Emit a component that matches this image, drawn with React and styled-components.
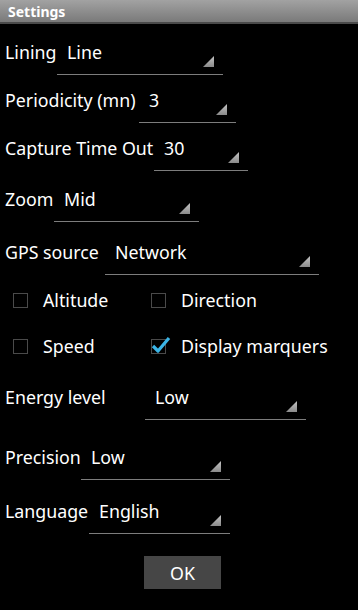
import React from 'react';
import styled, { createGlobalStyle } from 'styled-components';

const GlobalStyle = createGlobalStyle`
  html, body {
    margin: 0;
    padding: 0;
    background: #000;
  }
  body {
    font-family: "Noto Sans", "Open Sans", sans-serif;
    color: #fff;
  }
`;

const Screen = styled.div`
  width: 358px;
  height: 610px;
  background: #000;
  overflow: hidden;
`;

const TitleBar = styled.div`
  height: 22px;
  padding-left: 8px;
  display: flex;
  align-items: center;
  background: linear-gradient(#a2a2a2, #7a7a7a);
  border-bottom: 2px solid #4a4a4a;
  font-size: 14px;
  font-weight: 700;
  color: #fff;
`;

const Body = styled.div`
  padding-left: 5px;
  display: flex;
  flex-direction: column;
`;

const Row = styled.div`
  display: flex;
  align-items: flex-start;
  margin-top: ${p => p.$top}px;
`;

const Label = styled.div`
  width: ${p => p.$w}px;
  flex: none;
  font-size: 17.8px;
  line-height: 24px;
  white-space: nowrap;
`;

const Spinner = styled.div`
  width: ${p => p.$w}px;
  height: 35px;
  padding-left: 10px;
  box-sizing: border-box;
  display: flex;
  justify-content: space-between;
  border-bottom: 1px solid #7d7d7d;
`;

const Value = styled.span`
  font-size: 17.8px;
  line-height: 24px;
`;

const Arrow = styled.span`
  align-self: flex-end;
  width: 11px;
  height: 11px;
  margin: 0 9px 7px 0;
  background: linear-gradient(#c4c4c4, #8a8a8a);
  clip-path: polygon(100% 0, 100% 100%, 0 100%);
`;

const CheckGrid = styled.div`
  display: grid;
  grid-template-columns: 138px auto;
  row-gap: 22px;
  margin-top: 13px;
  padding-left: 8px;
`;

const CheckItem = styled.div`
  display: flex;
  align-items: center;
  gap: 15px;
  height: 24px;
  font-size: 17.8px;
`;

const Box = styled.span`
  position: relative;
  width: 15px;
  height: 15px;
  box-sizing: border-box;
  border: 1px solid #4a4a4a;
  flex: none;
`;

const Tick = styled.svg`
  position: absolute;
  left: -1px;
  top: -4px;
`;

const OkButton = styled.button`
  margin: 22px 0 0 139px;
  width: 77px;
  height: 33px;
  border: none;
  background: #464646;
  color: #fff;
  font-family: "Noto Sans", "Open Sans", sans-serif;
  font-size: 17.8px;
  padding: 0;
`;

const Select = ({ label, labelW, value, w, top }) => (
  <Row $top={top}>
    <Label $w={labelW}>{label}</Label>
    <Spinner $w={w}>
      <Value>{value}</Value>
      <Arrow />
    </Spinner>
  </Row>
);

const Check = ({ label, checked }) => (
  <CheckItem>
    <Box>
      {checked && (
        <Tick width="20" height="18" viewBox="0 0 20 18">
          <path d="M2 10 L7 15 L18 2" fill="none" stroke="#3ab4e6" strokeWidth="3.2" strokeLinejoin="round" />
        </Tick>
      )}
    </Box>
    <span>{label}</span>
  </CheckItem>
);

export default function App() {
  return (
    <Screen>
      <GlobalStyle />
      <TitleBar>Settings</TitleBar>
      <Body>
        <Select top={16} label="Lining" labelW={52} value="Line" w={166} />
        <Select top={13} label="Periodicity (mn)" labelW={134} value="3" w={97} />
        <Select top={13} label="Capture Time Out" labelW={149} value="30" w={94} />
        <Select top={16} label="Zoom" labelW={49} value="Mid" w={145} />
        <Select top={18} label="GPS source" labelW={100} value="Network" w={214} />
        <CheckGrid>
          <Check label="Altitude" />
          <Check label="Direction" />
          <Check label="Speed" />
          <Check label="Display marquers" checked />
        </CheckGrid>
        <Select top={27} label="Energy level" labelW={140} value="Low" w={161} />
        <Select top={25} label="Precision" labelW={76} value="Low" w={149} />
        <Select top={19} label="Language" labelW={84} value="English" w={141} />
        <div>
          <OkButton>OK</OkButton>
        </div>
      </Body>
    </Screen>
  );
}
